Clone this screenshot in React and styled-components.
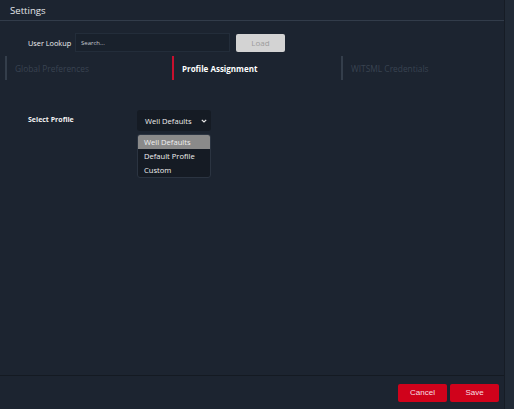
import React from 'react';
import styled, { createGlobalStyle } from 'styled-components';

const GlobalStyle = createGlobalStyle`
  html, body {
    margin: 0;
    padding: 0;
    background: #1c2430;
  }
  body {
    font-family: "Open Sans", "Noto Sans", sans-serif;
  }
`;

const Page = styled.div`
  display: flex;
  width: 514px;
  height: 409px;
  overflow: hidden;
`;
const Panel = styled.div`
  width: 504px;
  display: flex;
  flex-direction: column;
  background: #1c2430;
`;
const Strip = styled.div`
  flex: 1;
  background: #212a36;
  border-left: 1px solid #161c25;
`;
const Header = styled.div`
  height: 20px;
  padding-left: 10px;
  display: flex;
  align-items: center;
  font-size: 9.6px;
  color: #e4e6ea;
  border-bottom: 1px solid #323c4a;
`;
const Body = styled.div`
  flex: 1;
  display: flex;
  flex-direction: column;
`;
const LookupRow = styled.div`
  display: flex;
  align-items: center;
  margin-top: 12px;
  padding-left: 28px;
`;
const Label = styled.span`
  font-size: ${(p) => p.$size || '7.3px'};
  color: #f0f0f0;
  font-weight: ${(p) => (p.$bold ? 700 : 400)};
  width: ${(p) => p.$width || 'auto'};
  flex-shrink: 0;
`;
const SearchBox = styled.div`
  width: 155px;
  height: 19px;
  box-sizing: border-box;
  background: #19212c;
  border: 1px solid #232d3a;
  display: flex;
  align-items: center;
  padding-left: 5px;
  font-size: 6px;
  color: #c8ccd2;
`;
const LoadButton = styled.div`
  margin-left: 6px;
  width: 49px;
  height: 18px;
  background: #d3d3d3;
  border-radius: 2px;
  display: flex;
  align-items: center;
  justify-content: center;
  font-size: 8px;
  color: #9c9c9c;
`;
const Tabs = styled.div`
  display: grid;
  grid-template-columns: 167px 169px 1fr;
  margin-top: 4px;
  padding-left: 5px;
`;
const Tab = styled.div`
  height: 24px;
  display: flex;
  align-items: center;
  padding-left: 8px;
  border-left: 2px solid ${(p) => (p.$active ? '#c8102e' : '#343e4b')};
  font-size: ${(p) => (p.$active ? '8px' : '8.4px')};
  font-weight: ${(p) => (p.$active ? 700 : 400)};
  color: ${(p) => (p.$active ? '#ffffff' : '#394351')};
`;
const ProfileRow = styled.div`
  display: flex;
  align-items: flex-start;
  margin-top: 30px;
  padding-left: 28px;
`;
const ProfileLabel = styled(Label)`
  margin-top: 5px;
`;
const SelectWrap = styled.div`
  position: relative;
`;
const SelectBox = styled.div`
  width: 74px;
  height: 21px;
  box-sizing: border-box;
  background: #151b24;
  border-radius: 3px;
  display: flex;
  align-items: center;
  justify-content: space-between;
  padding: 0 4px 0 8px;
  font-size: 7.6px;
  color: #eeeeee;
`;
const Menu = styled.div`
  position: absolute;
  top: 24px;
  left: 0;
  width: 74px;
  box-sizing: border-box;
  background: #151b24;
  border: 1px solid #2b3441;
  border-radius: 3px;
  overflow: hidden;
`;
const Option = styled.div`
  height: 14px;
  display: flex;
  align-items: center;
  padding-left: 6px;
  font-size: 7.6px;
  color: #f0f0f0;
  background: ${(p) => (p.$selected ? '#8a8a8a' : 'transparent')};
`;
const Footer = styled.div`
  height: 33px;
  border-top: 1px solid #141a22;
  display: flex;
  align-items: center;
  justify-content: flex-end;
  gap: 3px;
  padding-right: 5px;
`;
const RedButton = styled.div`
  width: 49px;
  height: 18px;
  background: #d0021b;
  border-radius: 2px;
  display: flex;
  align-items: center;
  justify-content: center;
  font-family: "Liberation Sans", Arial, sans-serif;
  font-size: 8px;
  color: #f7dfe2;
`;

const Chevron = () => (
  <svg width="6" height="4" viewBox="0 0 6 4">
    <path d="M0.8 0.8 L3 3 L5.2 0.8" fill="none" stroke="#e8e8e8" strokeWidth="1.2" />
  </svg>
);

export default function App() {
  const options = ['Well Defaults', 'Default Profile', 'Custom'];
  return (
    <Page>
      <GlobalStyle />
      <Panel>
        <Header>Settings</Header>
        <Body>
          <LookupRow>
            <Label $width="47px">User Lookup</Label>
            <SearchBox>Search...</SearchBox>
            <LoadButton>Load</LoadButton>
          </LookupRow>
          <Tabs>
            <Tab>Global Preferences</Tab>
            <Tab $active>Profile Assignment</Tab>
            <Tab>WITSML Credentials</Tab>
          </Tabs>
          <ProfileRow>
            <ProfileLabel $bold $size="7px" $width="109px">Select Profile</ProfileLabel>
            <SelectWrap>
              <SelectBox>
                Well Defaults
                <Chevron />
              </SelectBox>
              <Menu>
                {options.map((o, i) => (
                  <Option key={o} $selected={i === 0}>{o}</Option>
                ))}
              </Menu>
            </SelectWrap>
          </ProfileRow>
        </Body>
        <Footer>
          <RedButton>Cancel</RedButton>
          <RedButton>Save</RedButton>
        </Footer>
      </Panel>
      <Strip />
    </Page>
  );
}
